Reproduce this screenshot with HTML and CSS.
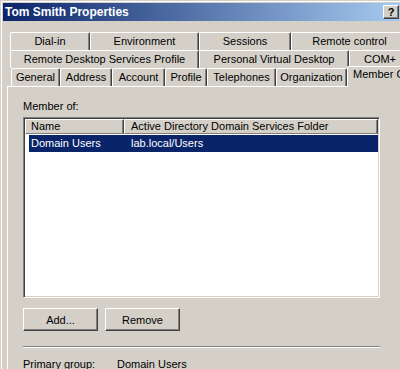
FILE: index.html
```html
<!DOCTYPE html>
<html lang="en">
  <head>
    <meta charset="UTF-8" />
    <title>Tom Smith Properties</title>
    <link rel="stylesheet" href="styles.css">
  </head>
  <body>
    <div id="window">
      <div class="titlebar">
        <span class="title">Tom Smith Properties</span>
        <button class="help">?</button>
      </div>

      <div class="dialog">
        <div class="tab-row">
          <div class="tab" style="width: 80px">Dial-in</div>
          <div class="tab" style="width: 109px">Environment</div>
          <div class="tab" style="width: 92px">Sessions</div>
          <div class="tab" style="width: 117px">Remote control</div>
        </div>
        <div class="tab-row">
          <div class="tab" style="width: 189px">Remote Desktop Services Profile</div>
          <div class="tab" style="width: 150px">Personal Virtual Desktop</div>
          <div class="tab" style="width: 62px">COM+</div>
        </div>
        <div class="tab-row last">
          <div class="tab" style="width: 49px">General</div>
          <div class="tab" style="width: 52px">Address</div>
          <div class="tab" style="width: 53px">Account</div>
          <div class="tab" style="width: 42px">Profile</div>
          <div class="tab" style="width: 69px">Telephones</div>
          <div class="tab" style="width: 71px">Organization</div>
          <div class="tab selected" style="width: 66px">Member Of</div>
        </div>

        <div class="panel">
          <div class="label">Member of:</div>
          <div class="listview">
            <div class="lv-header">
              <div class="lv-col name">Name</div>
              <div class="lv-col folder">Active Directory Domain Services Folder</div>
            </div>
            <div class="lv-row selected">
              <span class="cell name">Domain Users</span>
              <span class="cell folder">lab.local/Users</span>
            </div>
          </div>

          <div class="buttons">
            <button class="btn">Add...</button>
            <button class="btn">Remove</button>
          </div>

          <div class="separator"></div>

          <div class="primary">
            <span class="primary-label">Primary group:</span>
            <span>Domain Users</span>
          </div>
        </div>
      </div>
    </div>
  </body>
</html>
```

FILE: styles.css
```css
body {
  margin: 0;
  overflow: hidden;
  font-family: "Liberation Sans", Arial, sans-serif;
  font-size: 11px;
  color: #000;
}

#window {
  height: 369px;
  width: 400px;
  box-sizing: border-box;
  padding: 3px 0 0 3px;
  background-color: #d4d0c8;
  box-shadow: inset 1px 1px 0 #d4d0c8, inset 2px 2px 0 #fff;
  overflow: hidden;
}

.titlebar {
  height: 18px;
  display: flex;
  align-items: center;
  justify-content: space-between;
  padding-left: 2px;
  background: linear-gradient(to right, #0a246a, #a6caf0);
  color: #fff;
  font-weight: bold;
  font-size: 12px;
}

.help {
  width: 16px;
  height: 14px;
  margin-right: 1px;
  padding: 0;
  font-family: inherit;
  font-size: 11px;
  font-weight: bold;
  line-height: 11px;
  color: #000;
  background-color: #d4d0c8;
  border: 1px solid;
  border-color: #fff #404040 #404040 #fff;
  box-shadow: inset -1px -1px 0 #808080;
}

.dialog {
  margin-top: 11px;
  padding-left: 4px;
}

.tab-row {
  display: flex;
  height: 18px;
  padding-left: 3px;
}

.tab-row.last {
  padding-left: 4px;
}

.tab {
  flex: none;
  height: 18px;
  box-sizing: border-box;
  border-top: 1px solid #fff;
  border-left: 1px solid #fff;
  border-right: 1px solid #404040;
  border-radius: 2px 2px 0 0;
  box-shadow: inset -1px 0 0 #808080;
  text-align: center;
  line-height: 16px;
  white-space: nowrap;
  background-color: #d4d0c8;
}

.tab.selected {
  position: relative;
  z-index: 1;
  height: 21px;
  margin-top: -2px;
  line-height: 15px;
  border-right: none;
  box-shadow: none;
}

.panel {
  width: 420px;
  height: 300px;
  box-sizing: border-box;
  padding: 13px 0 0 15px;
  border-top: 1px solid #fff;
  border-left: 1px solid #fff;
}

.label {
  line-height: 13px;
}

.listview {
  width: 357px;
  height: 181px;
  box-sizing: border-box;
  margin-top: 4px;
  background-color: #fff;
  border: 1px solid;
  border-color: #808080 #fff #fff #808080;
  box-shadow: inset 1px 1px 0 #404040, inset -1px -1px 0 #d4d0c8;
  padding: 1px 0 0 1px;
}

.lv-header {
  display: flex;
  height: 15px;
}

.lv-col {
  box-sizing: border-box;
  height: 15px;
  line-height: 13px;
  background-color: #d4d0c8;
  border-top: 1px solid #fff;
  border-left: 1px solid #fff;
  border-right: 1px solid #404040;
  border-bottom: 1px solid #808080;
  box-shadow: inset -1px 0 0 #808080;
  white-space: nowrap;
}

.lv-col.name {
  width: 99px;
  padding-left: 5px;
}

.lv-col.folder {
  width: 254px;
  padding-left: 6px;
}

.lv-row {
  display: flex;
  height: 17px;
  line-height: 17px;
  margin: 1px 0 0 4px;
  width: 349px;
}

.lv-row.selected {
  background-color: #0a246a;
  color: #fff;
}

.cell.name {
  width: 100px;
  padding-left: 2px;
}

.buttons {
  display: flex;
  gap: 7px;
  margin-top: 10px;
}

.btn {
  width: 75px;
  height: 23px;
  padding: 0;
  font-family: inherit;
  font-size: 11px;
  color: #000;
  background-color: #d4d0c8;
  border: 1px solid;
  border-color: #fff #404040 #404040 #fff;
  box-shadow: inset -1px -1px 0 #808080;
}

.separator {
  width: 357px;
  margin-top: 15px;
  border-top: 1px solid #808080;
  border-bottom: 1px solid #fff;
}

.primary {
  display: flex;
  margin-top: 10px;
  line-height: 13px;
}

.primary-label {
  width: 94px;
}
```
